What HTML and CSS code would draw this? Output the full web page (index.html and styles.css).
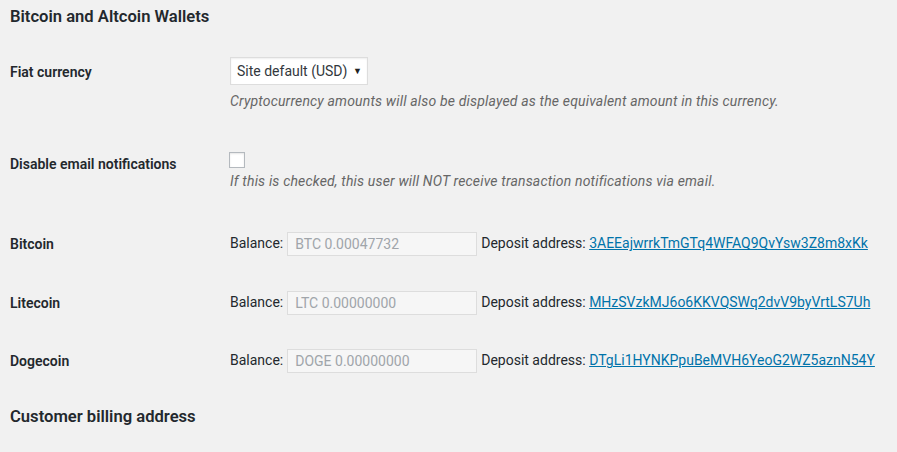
FILE: index.html
```html
<!DOCTYPE html>
<html>
<head>
<meta charset="utf-8">
<link rel="stylesheet" href="styles.css">
</head>
<body>
<div class="wrap">
  <h2 class="section-title">Bitcoin and Altcoin Wallets</h2>
  <div class="form-table">
    <div class="row row-fiat">
      <div class="th">Fiat currency</div>
      <div class="td">
        <span class="select-wrap">
          <select class="select"><option>Site default (USD)</option></select>
          <span class="arrow">▼</span>
        </span>
        <p class="description">Cryptocurrency amounts will also be displayed as the equivalent amount in this currency.</p>
      </div>
    </div>
    <div class="row row-email">
      <div class="th">Disable email notifications</div>
      <div class="td">
        <input type="checkbox" class="checkbox">
        <p class="description">If this is checked, this user will NOT receive transaction notifications via email.</p>
      </div>
    </div>
    <div class="row row-coin">
      <div class="th">Bitcoin</div>
      <div class="td inline">
        <span>Balance:</span>
        <input type="text" class="balance" value="BTC 0.00047732" readonly>
        <span>Deposit address: <a href="#">3AEEajwrrkTmGTq4WFAQ9QvYsw3Z8m8xKk</a></span>
      </div>
    </div>
    <div class="row row-coin">
      <div class="th">Litecoin</div>
      <div class="td inline">
        <span>Balance:</span>
        <input type="text" class="balance" value="LTC 0.00000000" readonly>
        <span>Deposit address: <a href="#">MHzSVzkMJ6o6KKVQSWq2dvV9byVrtLS7Uh</a></span>
      </div>
    </div>
    <div class="row row-coin">
      <div class="th">Dogecoin</div>
      <div class="td inline">
        <span>Balance:</span>
        <input type="text" class="balance" value="DOGE 0.00000000" readonly>
        <span>Deposit address: <a href="#">DTgLi1HYNKPpuBeMVH6YeoG2WZ5aznN54Y</a></span>
      </div>
    </div>
  </div>
  <h2 class="section-title second">Customer billing address</h2>
</div>
</body>
</html>
```

FILE: styles.css
```css
html, body {
  margin: 0;
  padding: 0;
  background: #f1f1f1;
}
body {
  font-family: Roboto, "Liberation Sans", sans-serif;
  font-size: 14px;
  color: #23282d;
  line-height: 1.4;
}
.wrap {
  padding: 1px 10px 0;
}
.section-title {
  font-size: 16.6px;
  font-weight: 600;
  margin: 0;
  padding-top: 4px;
  line-height: 24px;
  color: #23282d;
}
.section-title.second {
  margin-top: 10px;
}
.form-table {
  margin-top: 28px;
}
.row {
  display: flex;
  align-items: flex-start;
}
.th {
  width: 220px;
  flex: none;
  font-weight: 600;
  line-height: 18px;
}
.td {
  flex: 1;
  min-width: 0;
}
.row-fiat {
  height: 65px;
}
.row-fiat .th {
  padding-top: 6px;
}
.select-wrap {
  position: relative;
  display: inline-block;
}
.select {
  -webkit-appearance: none;
  appearance: none;
  font-family: Roboto, "Liberation Sans", sans-serif;
  font-size: 14px;
  color: #32373c;
  background: #fff;
  border: 1px solid #ddd;
  box-shadow: 0 1px 2px rgba(0,0,0,.07) inset;
  height: 28px;
  width: 138px;
  padding: 0 14px 0 6px;
  margin: 0;
  border-radius: 0;
  display: block;
}
.arrow {
  position: absolute;
  right: 6px;
  top: 9px;
  font-size: 9px;
  line-height: 10px;
  color: #222;
  pointer-events: none;
}
.description {
  margin: 6px 0 0;
  font-style: italic;
  color: #666;
  line-height: 20px;
  letter-spacing: 0.17px;
}
.row-email {
  height: 80px;
}
.row-email .th {
  padding-top: 33px;
}
.row-email .td {
  padding-top: 29px;
}
.checkbox {
  -webkit-appearance: none;
  appearance: none;
  width: 16px;
  height: 16px;
  margin: 1px 0 0 -1px;
  border: 1px solid #b4b9be;
  background: #fff;
  box-shadow: inset 0 1px 2px rgba(0,0,0,.1);
  display: block;
}
.row-email .description {
  margin-top: 3px;
}
.row-coin {
  height: 58.5px;
  align-items: center;
}
.form-table .row-coin:nth-child(3) {
  margin-top: 13px;
}
.inline {
  display: flex;
  align-items: center;
  white-space: nowrap;
}
.balance {
  font-family: Roboto, "Liberation Sans", sans-serif;
  font-size: 14px;
  color: #a0a5aa;
  background: #f6f6f6;
  border: 1px solid #ddd;
  box-shadow: none;
  width: 190px;
  height: 24px;
  box-sizing: border-box;
  padding: 0 7px;
  margin: 0 4px;
  outline: none;
}
a {
  color: #0073aa;
  text-decoration: underline;
}
```
